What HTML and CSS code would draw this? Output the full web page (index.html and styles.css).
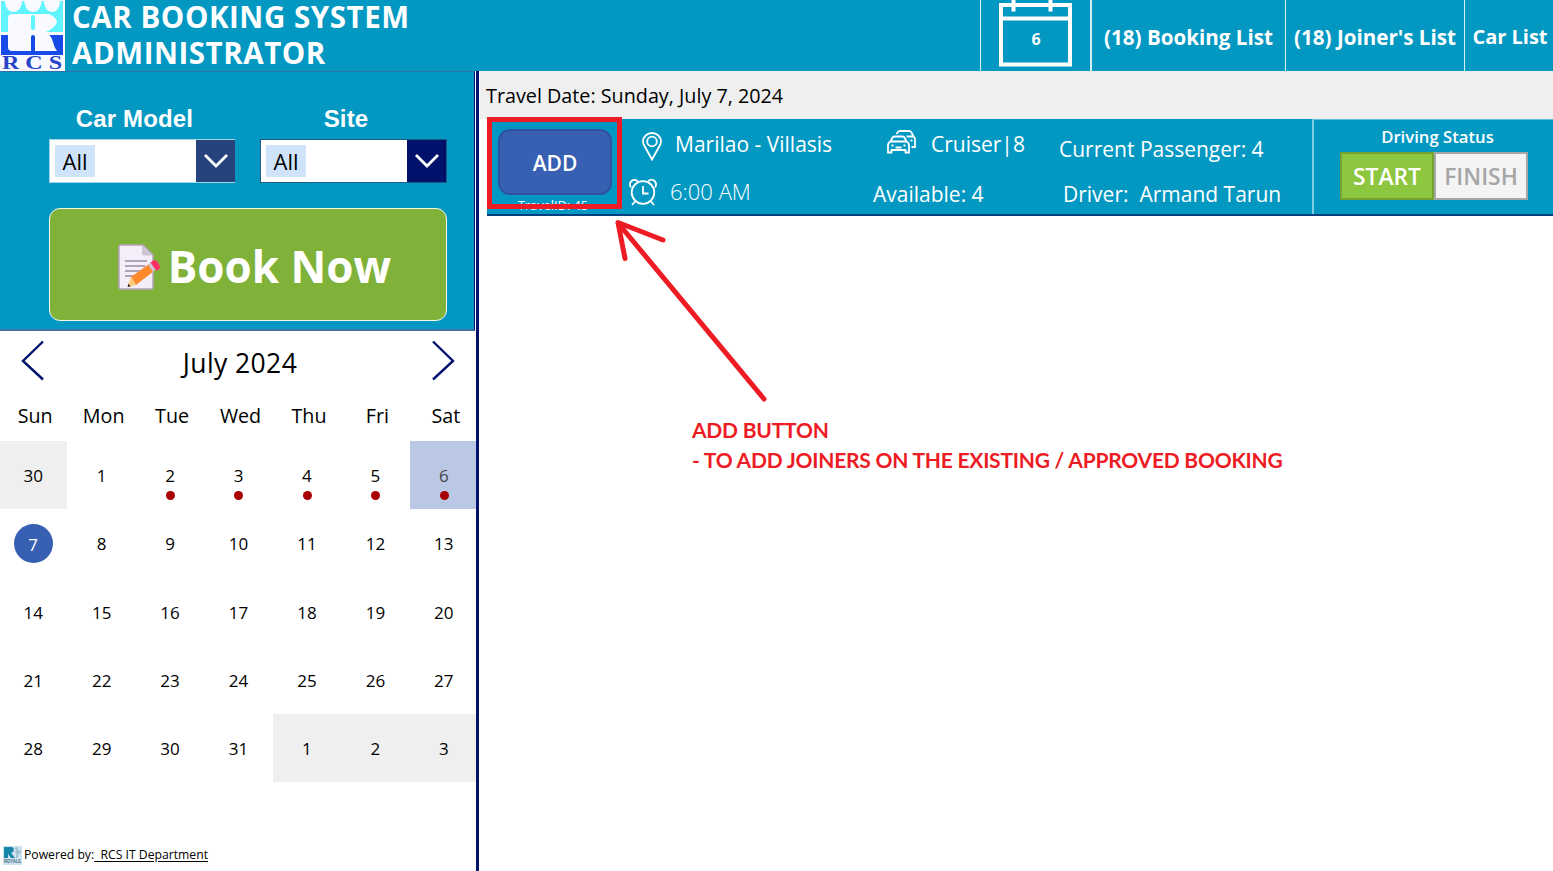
FILE: index.html
```html
<!DOCTYPE html>
<html lang="en">
<head>
  <meta charset="UTF-8" />
  <meta name="viewport" content="width=device-width, initial-scale=1" />
  <title>Car Booking System</title>
  <link rel="stylesheet" href="styles.css">
</head>
<body>
  <header class="header">
    <svg class="logo" viewBox="0 0 65 71" width="65" height="71">
      <rect width="65" height="71" fill="#f8faff"/>
      <rect x="1" y="1" width="62" height="31" fill="#62f4fe"/>
      <rect x="1" y="35" width="62" height="20" fill="#164be8"/>
      <path d="M5 0h17v3Q20 12 13.500 12T5 3zM24.500 0h17v3q-2 9-8.500 9t-8.500-9zM44 0h16v3q-2 9-8 9t-8-9z" fill="#f8faff"/>
      <path d="M12 14H49Q56 17 57 22Q55 28 46 32Q51 35 53 42Q54 47 57 51H12Q8 51 8 47V19Q8 14 12 14z" fill="#f8faff"/>
      <path d="M33 17v11" stroke="#62f4fe" stroke-width="4" stroke-linecap="round"/>
      <path d="M33 37v13" stroke="#164be8" stroke-width="4" stroke-linecap="round"/>
      <text class="logo-text" x="2" y="69" textLength="60" lengthAdjust="spacingAndGlyphs">R C S</text>
    </svg>
    <h1>CAR BOOKING SYSTEM<br>ADMINISTRATOR</h1>
    <nav>
      <a class="nav-calendar">
        <svg width="75" height="68" viewBox="0 0 75 68">
          <path d="M3 5h69v59.500H3zM3 18.500h69" fill="none" stroke="#fff" stroke-width="4"/>
          <path d="M15.500 0v11.500M52.500 0v11.500" stroke="#fff" stroke-width="4"/>
        </svg>
        <span>6</span>
      </a>
      <a class="nav-booking"><span>(18) Booking List</span></a>
      <a class="nav-joiner"><span>(18) Joiner's List</span></a>
      <a class="nav-car"><span>Car List</span></a>
    </nav>
  </header>

  <div class="page">
    <aside class="sidebar">
      <section class="filters">
        <div class="filter-row">
          <div class="filter model">
            <label>Car Model</label>
            <div class="select">
              <span>All</span>
              <i><svg width="24" height="14" viewBox="0 0 24 14"><path d="M1 1l11 11L23 1"/></svg></i>
            </div>
          </div>
          <div class="filter site">
            <label>Site</label>
            <div class="select">
              <span>All</span>
              <i><svg width="24" height="14" viewBox="0 0 24 14"><path d="M1 1l11 11L23 1"/></svg></i>
            </div>
          </div>
        </div>
        <button class="book">
          <svg width="43" height="46" viewBox="0 0 43 46">
            <path d="M2 1h23l10 10v32q0 2-2 2H3q-2 0-2-2V3q0-2 1-2z" fill="#f3eef8" stroke="#b3a3bd" stroke-width="1.500"/>
            <path d="M24 1.500v8q0 2 2 2h9z" fill="#cdc4d6"/>
            <path d="M7 17h22M7 22h20M7 27h15M7 32h10" stroke="#998aa6" stroke-width="1.500"/>
            <path d="M13 33l18-13 5 7-18 14z" fill="#ff8a2e"/>
            <path d="M13 33l5 8-8.500 2z" fill="#fccb79"/>
            <path d="M10.500 39.500l2 3-3 .5z" fill="#402a32"/>
            <path d="M30 20.500l3-2.500 5 7-3 3z" fill="#cdc4d6"/>
            <path d="M32.500 18.500l2.500-2q3-1 5 2t2 6l-3.500 2.500z" fill="#fc3164"/>
          </svg>
          <span>Book Now</span>
        </button>
      </section>

      <section class="calendar">
        <div class="month">
          <svg width="24" height="42" viewBox="0 0 24 42"><path d="M22 1.500L2 21l20 18.500"/></svg>
          <h2>July 2024</h2>
          <svg width="24" height="42" viewBox="0 0 24 42"><path d="M2 1.500L22 21 2 39.500"/></svg>
        </div>
        <div class="weekdays">
          <div>Sun</div><div>Mon</div><div>Tue</div><div>Wed</div><div>Thu</div><div>Fri</div><div>Sat</div>
        </div>
        <div class="days">
          <div class="other">30</div>
          <div>1</div>
          <div class="booked">2</div>
          <div class="booked">3</div>
          <div class="booked">4</div>
          <div class="booked">5</div>
          <div class="booked today">6</div>
          <div class="selected"><span>7</span></div>
          <div>8</div>
          <div>9</div>
          <div>10</div>
          <div>11</div>
          <div>12</div>
          <div>13</div>
          <div>14</div>
          <div>15</div>
          <div>16</div>
          <div>17</div>
          <div>18</div>
          <div>19</div>
          <div>20</div>
          <div>21</div>
          <div>22</div>
          <div>23</div>
          <div>24</div>
          <div>25</div>
          <div>26</div>
          <div>27</div>
          <div>28</div>
          <div>29</div>
          <div>30</div>
          <div>31</div>
          <div class="other">1</div>
          <div class="other">2</div>
          <div class="other">3</div>
        </div>
      </section>

      <footer>
        <svg width="19" height="19" viewBox="0 0 19 19">
          <rect width="19" height="19" fill="#cfe3ee"/>
          <path d="M1 1h8q3 1 1 5l-2 1 4 5H8L5 8v4H1z" fill="#1686a8"/>
          <path d="M12 2l5 4-4 5M14 1v11M12 6h6" stroke="#8fb4c8" fill="none"/>
          <text class="royale" x="1" y="17" textLength="17" lengthAdjust="spacingAndGlyphs">ROYALE</text>
        </svg>
        <span>Powered by:<u>&nbsp; RCS IT Department</u></span>
      </footer>
    </aside>

    <main>
      <div class="travel-date"><span>Travel Date: Sunday, July 7, 2024</span></div>
      <div class="trip">
        <div class="trip-action">
          <button class="add">ADD</button>
          <small>TravelID: 45</small>
          <div class="highlight"></div>
        </div>
        <div class="trip-route">
          <div class="place">
            <svg width="20" height="29" viewBox="0 0 20 29">
              <path d="M10 27.500L2.500 14Q1 11.500 1 9.500a9 8.500 0 0 1 18 0q0 2-1.500 4.500z"/>
              <circle cx="10" cy="9.500" r="4.800"/>
            </svg>
            <span>Marilao - Villasis</span>
          </div>
          <div class="time">
            <svg width="30" height="28" viewBox="0 0 30 28">
              <circle cx="15" cy="14.500" r="11.300"/>
              <path d="M15 8v7.500h5.500M7 23.500l-3 3.500M23 23.500l3 3.500"/>
              <path d="M3 9.500A4.600 4.600 0 1 1 10 3.500M27 9.500A4.600 4.600 0 1 0 20 3.500"/>
            </svg>
            <span>6:00 AM</span>
          </div>
        </div>
        <div class="trip-car">
          <div class="car">
            <svg width="29" height="24" viewBox="0 0 29 24">
              <path d="M1 22.500v-7q0-3 2.500-4l2-4Q6.500 6.500 8 6.500h7q1.500 0 2.500 1l2 4q2.500 1 2.500 4v7h-3.500V20H4.500v2.500zM3.500 11.500h16"/>
              <path d="M9.500 4l1-1.500Q11.500 1 13 1h9q1.500 0 2.500 1.500l2 4Q28 7.500 28 9.500v7.500h-3.500M19.500 6.500h7"/>
              <path d="M4.500 15.500h2M16.500 15.500h2M8.500 17.500h6M23.500 10.500h2"/>
            </svg>
            <span>Cruiser|8</span>
          </div>
          <div class="available"><span>Available: 4</span></div>
        </div>
        <div class="trip-people">
          <div class="passenger"><span>Current Passenger: 4</span></div>
          <div class="driver"><span>Driver:&nbsp; Armand Tarun</span></div>
        </div>
        <div class="trip-status">
          <label>Driving Status</label>
          <div class="status-buttons">
            <button class="start">START</button>
            <button class="finish">FINISH</button>
          </div>
        </div>
      </div>
      <svg class="arrow" width="160" height="190" viewBox="0 0 160 190">
        <path d="M154 182L8 6M53 23L8 5.500l7 36"/>
      </svg>
      <p class="note"><span class="note-title">ADD BUTTON</span><br><span class="note-text">- TO ADD JOINERS ON THE EXISTING / APPROVED BOOKING</span></p>
    </main>
  </div>
</body>
</html>
```
FILE: styles.css
```css
* {
  box-sizing: border-box;
}
body {
  margin: 0;
  width: 1553px;
  height: 871px;
  overflow: hidden;
  background: #fff;
  font-family: "Open Sans", sans-serif;
  color: #000;
}
button {
  font-family: inherit;
  padding: 0;
}
span, u {
  white-space: nowrap;
}
.header {
  display: flex;
  height: 71px;
  background: #0298c2;
  color: #fff;
}
.logo-text {
  font: bold 18px "Liberation Serif", serif;
  fill: #2743c8;
}
h1 {
  margin: -1px 0 0;
  padding-left: 7px;
  font-size: 29.5px;
  line-height: 36px;
  font-weight: 700;
  letter-spacing: 0.55px;
  white-space: nowrap;
}
nav {
  display: flex;
  margin-left: auto;
  font-weight: 700;
  font-size: 20.6px;
}
nav a {
  display: flex;
  align-items: center;
  justify-content: center;
  border-left: 1px solid #d5f0f7;
  padding-top: 2px;
}
.nav-calendar {
  position: relative;
  width: 110px;
  padding: 0;
  align-items: flex-start;
}
.nav-calendar span {
  position: absolute;
  left: 0;
  width: 110px;
  top: 28px;
  text-align: center;
  font-size: 16px;
}
.nav-booking {
  width: 195px;
  border-left-width: 2px !important;
}
.nav-joiner {
  width: 179px;
}
.nav-car {
  width: 89px;
  padding-left: 2px;
}
.nav-car span {
  font-size: 20px;
}
.page {
  display: flex;
  height: 800px;
}
.sidebar {
  display: flex;
  flex-direction: column;
  width: 479px;
  border-right: 3px solid #00126b;
  overflow: hidden;
}
.filters {
  width: 475px;
  height: 260px;
  padding: 34px 0 0 49px;
  background: #0298c2;
  border-top: 1px solid #2f72a8;
  border-bottom: 2px solid #4273a8;
  border-right: 1px solid #00126b;
}
.filter-row {
  display: flex;
  gap: 25px;
}
.filter label {
  display: block;
  height: 33px;
  padding-right: 15px;
  text-align: center;
  font: bold 24px/26px "Liberation Sans", Arial, sans-serif;
  letter-spacing: 0.15px;
  color: #fff;
}
.select {
  display: flex;
  width: 186px;
  height: 44px;
  background: #fff;
  border: 1px solid #9fd6e6;
  border-right: none;
}
.select span {
  width: 40px;
  height: 32px;
  margin: 5px 0 0 5px;
  background: #cfe3fb;
  font-size: 22px;
  line-height: 33px;
  text-align: center;
}
.select i {
  display: flex;
  align-items: center;
  justify-content: center;
  width: 39px;
  margin-left: auto;
  background: #27437c;
}
.select path {
  fill: none;
  stroke: #fff;
  stroke-width: 2.8;
}
.site .select {
  width: 187px;
  border: 1px solid #1f5c85;
}
.site .select i {
  background: #00126b;
}
.book {
  display: flex;
  align-items: center;
  justify-content: center;
  gap: 7px;
  width: 398px;
  height: 113px;
  margin-top: 25px;
  padding: 3px 0 0 13px;
  background: #80b239;
  border: 1px solid #f4f9ea;
  border-radius: 11px;
  color: #fff;
  font-size: 44px;
  font-weight: 700;
}
.book svg {
  margin-top: 2px;
}
.calendar {
  width: 476px;
  overflow: hidden;
}
.month {
  display: flex;
  justify-content: space-between;
  height: 65px;
  padding: 9px 21px 0;
}
.month path {
  fill: none;
  stroke: #00126b;
  stroke-width: 2.4;
}
h2 {
  margin: 5px 0 0 4px;
  font-size: 26.5px;
  line-height: 36px;
  font-weight: 400;
  letter-spacing: 0.4px;
}
.weekdays, .days {
  display: grid;
  grid-template-columns: repeat(7, 68.45px);
}
.weekdays {
  height: 45px;
  margin-left: 1px;
  line-height: 39px;
  text-align: center;
  font-size: 19.7px;
}
.days {
  grid-auto-rows: 68.3px;
  margin-left: -1px;
  font-size: 17px;
}
.days div {
  position: relative;
  display: flex;
  align-items: center;
  justify-content: center;
  padding-top: 1px;
}
.days .other {
  background: #efefef;
}
.days .today {
  background: #bbc8e5;
  color: #444;
}
.booked::after {
  content: "";
  position: absolute;
  left: 30px;
  top: 50px;
  width: 9px;
  height: 9px;
  border-radius: 50%;
  background: #a80000;
}
.days .selected {
  padding: 0;
}
.selected span {
  width: 39px;
  height: 39px;
  line-height: 41px;
  border-radius: 50%;
  background: #3860b2;
  color: #fff;
  text-align: center;
}
footer {
  display: flex;
  align-items: center;
  gap: 2px;
  height: 22px;
  margin: auto 0 6px 3px;
  font-size: 12.2px;
}
footer svg {
  margin-top: 2px;
}
u {
  text-underline-offset: 2px;
}
.royale {
  font: bold 4.5px "Liberation Sans", sans-serif;
  fill: #3a6d85;
}
main {
  position: relative;
  flex: 1;
}
.travel-date {
  height: 48px;
  margin-left: 1px;
  padding-left: 6px;
  background: #efefef;
  font-size: 19.75px;
  line-height: 50px;
}
.trip {
  display: flex;
  height: 97px;
  margin-left: 8px;
  background: #0298c2;
  border-bottom: 2px solid #043f80;
  color: #fff;
  font-size: 21px;
}
.trip svg {
  fill: none;
  stroke: #fff;
  stroke-width: 1.8;
  flex: none;
}
.trip-action {
  position: relative;
  width: 135px;
  padding: 10px 0 0 11px;
}
.add {
  display: block;
  width: 114px;
  height: 66px;
  padding-top: 1px;
  border: 2px solid #2f52a0;
  border-radius: 12px;
  background: #3860b2;
  color: #fff;
  font-size: 21px;
  font-weight: 600;
}
.trip-action small {
  display: block;
  width: 110px;
  height: 16px;
  overflow: hidden;
  text-align: center;
  font-size: 12.8px;
  line-height: 21px;
}
.highlight {
  position: absolute;
  left: 0;
  top: -2px;
  width: 135px;
  height: 92px;
  border: 5px solid #ed1c24;
}
.trip-route {
  width: 251px;
}
.place, .time, .car, .available {
  display: flex;
  align-items: center;
}
.place {
  height: 50px;
  gap: 13px;
  padding: 4px 0 0 20px;
}
.place span {
  margin-top: -5px;
}
.time {
  height: 45px;
  gap: 12px;
  padding-left: 6px;
  font-size: 22px;
  font-weight: 300;
}
.time svg {
  margin-top: 1px;
}
.time span {
  margin-top: -2px;
}
.trip-car {
  width: 186px;
}
.car {
  height: 50px;
  gap: 15px;
  padding-left: 14px;
}
.car svg {
  margin-top: -4px;
}
.available {
  height: 49px;
}
.trip-people {
  width: 253px;
}
.passenger {
  height: 52px;
  line-height: 60px;
}
.driver {
  height: 43px;
  padding-left: 4px;
  line-height: 46px;
}
.trip-status {
  width: 241px;
  border-left: 2px solid #80cce0;
  border-top: 1px solid #5cbdd6;
}
.trip-status label {
  display: block;
  width: 247px;
  height: 32px;
  line-height: 34px;
  text-align: center;
  font-size: 16.7px;
  font-weight: 600;
}
.status-buttons {
  display: flex;
  padding-left: 26px;
}
.status-buttons button {
  width: 94px;
  height: 48px;
  border: 2px solid #74a232;
  background: #8dc63f;
  color: #fff;
  font-size: 22.8px;
  font-weight: 600;
}
.status-buttons .finish {
  border-color: #a6a6a6;
  background: #f4f4f4;
  color: #a6a6a6;
}
.arrow {
  position: absolute;
  left: 131px;
  top: 146px;
}
.arrow path {
  fill: none;
  stroke: #ed1c24;
  stroke-width: 5;
  stroke-linecap: round;
  stroke-linejoin: round;
}
.note {
  position: absolute;
  left: 213px;
  top: 344px;
  margin: 0;
  color: #ed1c24;
  font: bold 21px/30px Lato, sans-serif;
  letter-spacing: -0.23px;
}
```
